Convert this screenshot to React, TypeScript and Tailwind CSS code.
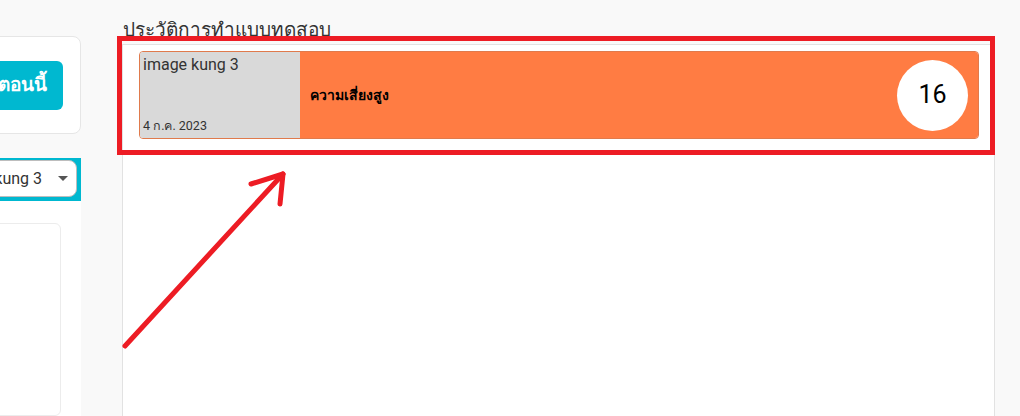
import React from "react";

type HistoryItem = {
  id: string;
  name: string;
  date: string;
  level: string;
  score: number;
};

const history: HistoryItem[] = [
  { id: "1", name: "image kung 3", date: "4 ก.ค. 2023", level: "ความเสี่ยงสูง", score: 16 },
];

const font = "font-['Roboto','Noto_Sans','Noto_Sans_CJK_SC',sans-serif]";

const LeftColumn = () => {
  return (
    <aside className="w-[81px] shrink-0 overflow-hidden flex flex-col pt-[36px]">
      <div className="flex justify-end">
        <div className="w-[240px] shrink-0 h-[98px] bg-white border border-[#e6e6e6] rounded-lg flex items-start justify-end pt-[24px] pr-[17px]">
          <button className="h-[49px] w-[200px] shrink-0 rounded-md bg-[#00b8d0] text-white text-[19px] font-bold whitespace-nowrap flex items-center justify-end pr-[16px]">
            ทำแบบทดสอบตอนนี้
          </button>
        </div>
      </div>
      <div className="mt-[24px] flex justify-end">
        <div className="w-[240px] shrink-0 bg-[#00b8d0] pt-[2px] pr-[4px] pb-[4px]">
          <div className="h-[37px] bg-white rounded-lg border border-[#bdbdbd] flex items-center justify-end pr-[8px] gap-[16px]">
            <span className="text-[16px] text-[#333] whitespace-nowrap">image kung 3</span>
            <span className="w-0 h-0 border-l-[5px] border-r-[5px] border-t-[5px] border-l-transparent border-r-transparent border-t-[#555]" />
          </div>
        </div>
      </div>
      <div className="flex-1 bg-white flex justify-end pt-[22px] pr-[20px]">
        <div className="w-[200px] shrink-0 h-full bg-white border border-[#ececec] rounded-md" />
      </div>
    </aside>
  );
};

const HistoryCard = ({ item }: { item: HistoryItem }) => {
  return (
    <div className="h-[88px] flex rounded-[4px] border border-[#e07a4c] overflow-hidden">
      <div className="w-[160px] shrink-0 bg-[#d9d9d9] flex flex-col justify-between pl-[3px] pt-[3px] pb-[4px]">
        <p className="text-[16px] leading-5 text-[#333]">{item.name}</p>
        <p className="text-[12.5px] leading-4 text-[#333]">{item.date}</p>
      </div>
      <div className="flex-1 bg-[#ff7c43] flex items-center justify-between pl-[10px] pr-[10px]">
        <span className="text-[14px] font-semibold text-black">{item.level}</span>
        <div className="w-[71px] h-[71px] rounded-full bg-white flex items-center justify-center text-[25px] text-black">
          {item.score}
        </div>
      </div>
    </div>
  );
};

const Annotation = () => (
  <svg className="absolute inset-0 pointer-events-none" width="1020" height="416" viewBox="0 0 1020 416">
    <rect x="119.5" y="38.5" width="873" height="114" fill="none" stroke="#ed1c24" strokeWidth="5" />
    <g stroke="#ed1c24" strokeWidth="5" strokeLinecap="round" fill="none">
      <path d="M125 346 L283 174" />
      <path d="M251 184 L283 174 L280 204" strokeLinejoin="round" />
    </g>
  </svg>
);

export default function App() {
  return (
    <div className={`relative w-[1020px] h-[416px] overflow-hidden bg-[#f9f9f9] flex ${font}`}>
      <LeftColumn />
      <main className="ml-[41px] w-[873px] shrink-0 flex flex-col pt-[16px]">
        <h2 className="h-[28px] text-[19px] leading-7 text-[#333] pl-[1px] whitespace-nowrap">ประวัติการทำแบบทดสอบ</h2>
        <section className="flex-1 bg-white border-t border-l border-r border-[#e2e2e2] pt-[6px] pl-[16px] pr-[15px] flex flex-col gap-2">
          {history.map((item) => (
            <HistoryCard key={item.id} item={item} />
          ))}
        </section>
      </main>
      <Annotation />
    </div>
  );
}
